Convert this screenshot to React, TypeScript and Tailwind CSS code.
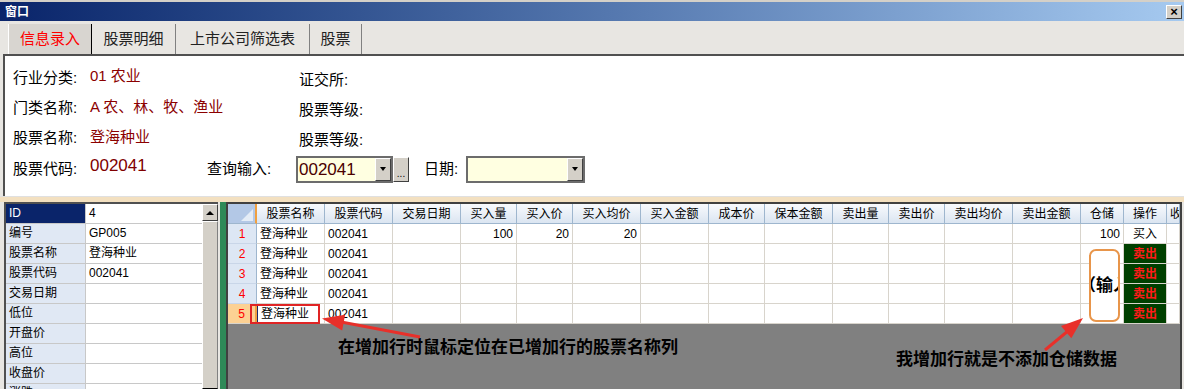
import React from "react";

const cols = [
  { t: "股票名称", w: "w-[68px]" },
  { t: "股票代码", w: "w-[68px]" },
  { t: "交易日期", w: "w-[68px]" },
  { t: "买入量", w: "w-[56px]" },
  { t: "买入价", w: "w-[56px]" },
  { t: "买入均价", w: "w-[68px]" },
  { t: "买入金额", w: "w-[68px]" },
  { t: "成本价", w: "w-[56px]" },
  { t: "保本金额", w: "w-[68px]" },
  { t: "卖出量", w: "w-[56px]" },
  { t: "卖出价", w: "w-[56px]" },
  { t: "卖出均价", w: "w-[68px]" },
  { t: "卖出金额", w: "w-[68px]" },
  { t: "仓储", w: "w-[43px]" },
  { t: "操作", w: "w-[43px]" },
  { t: "收益", w: "w-[13px]" },
];

const empty = ["", "", "", "", "", "", "", "", "", "", "", ""];
const rows = [
  ["登海种业", "002041", "", "100", "20", "20", "", "", "", "", "", "", "", "100", "买入", ""],
  ["登海种业", "002041", ...empty, "卖出", ""],
  ["登海种业", "002041", ...empty, "卖出", ""],
  ["登海种业", "002041", ...empty, "卖出", ""],
  ["登海种业", "002041", ...empty, "卖出", ""],
];

const props = [
  ["ID", "4"],
  ["编号", "GP005"],
  ["股票名称", "登海种业"],
  ["股票代码", "002041"],
  ["交易日期", ""],
  ["低位", ""],
  ["开盘价", ""],
  ["高位", ""],
  ["收盘价", ""],
  ["涨跌", ""],
];

const tabs = [
  { t: "信息录入", w: "w-[84px]" },
  { t: "股票明细", w: "w-[84px]" },
  { t: "上市公司筛选表", w: "w-[134px]" },
  { t: "股票", w: "w-[52px]" },
];

function arrowHead(x1: number, y1: number, x2: number, y2: number) {
  const len = Math.hypot(x2 - x1, y2 - y1);
  const ux = (x2 - x1) / len;
  const uy = (y2 - y1) / len;
  const bx = x2 - ux * 22;
  const by = y2 - uy * 22;
  const px = -uy * 8;
  const py = ux * 8;
  return `${x2},${y2} ${bx + px},${by + py} ${bx - px},${by - py}`;
}

function DropBtn() {
  return (
    <div className="w-[16px] h-full bg-[#d4d0c8] border border-t-white border-l-white border-b-[#404040] border-r-[#404040] flex items-center justify-center">
      <div className="w-0 h-0 border-l-[3.5px] border-r-[3.5px] border-t-[4px] border-l-transparent border-r-transparent border-t-black" />
    </div>
  );
}

export default function App() {
  return (
    <div className="relative w-[1184px] h-[389px] overflow-hidden bg-[#e8e6e2] flex flex-col font-['Liberation_Sans','Noto_Sans_CJK_SC',sans-serif] text-black">
      {/* Title bar */}
      <div className="h-[21px] pt-[2px] bg-[#d4d0c8]">
        <div className="h-[19px] bg-gradient-to-r from-[#0a246a] to-[#a6caf0] flex items-center justify-between pl-[5px] pr-[2px]">
          <span className="text-white font-bold text-[12px] leading-none">窗口</span>
          <div className="w-[16px] h-[14px] bg-[#d4d0c8] border border-t-white border-l-white border-b-[#404040] border-r-[#404040] flex items-center justify-center text-[13px] font-bold leading-none">
            ×
          </div>
        </div>
      </div>

      {/* Tabs */}
      <div className="h-[33px] pl-[8px] pt-[3px] flex items-end">
        {tabs.map((tab, i) => (
          <div
            key={tab.t}
            className={
              i === 0
                ? `${tab.w} h-[30px] bg-[#d8d5d0] border-l border-l-white border-r border-r-black flex items-center justify-center text-[15px] text-[#ff0000]`
                : `${tab.w} h-[30px] border-r border-r-[#808080] flex items-center justify-center text-[15px] text-[#222]`
            }
          >
            {tab.t}
          </div>
        ))}
      </div>

      {/* Form panel */}
      <div className="h-[142px] bg-white border-t-2 border-l-2 border-[#505050] ml-[3px] pl-[8px] pt-[7px] text-[15px]">
        <div className="flex h-[30px] items-center">
          <div className="w-[286px] flex items-center">
            <span className="w-[77px]">行业分类:</span>
            <span className="text-[#8b0000] -translate-y-[2px]">01 农业</span>
          </div>
          <span className="translate-y-[2px]">证交所:</span>
        </div>
        <div className="flex h-[30px] items-center">
          <div className="w-[286px] flex items-center">
            <span className="w-[77px]">门类名称:</span>
            <span className="text-[#8b0000] -translate-y-[1px]">A 农、林、牧、渔业</span>
          </div>
          <span className="translate-y-[2px]">股票等级:</span>
        </div>
        <div className="flex h-[30px] items-center">
          <div className="w-[286px] flex items-center">
            <span className="w-[77px]">股票名称:</span>
            <span className="text-[#8b0000] -translate-y-[1px]">登海种业</span>
          </div>
          <span className="translate-y-[2px]">股票等级:</span>
        </div>
        <div className="flex h-[30px] items-center mt-[1px]">
          <span className="w-[77px]">股票代码:</span>
          <span className="w-[117px] text-[#800000] text-[17px] -translate-y-[3px]">002041</span>
          <span className="w-[89px]">查询输入:</span>
          <div className="w-[97px] h-[27px] border-2 border-[#6c6c6c] bg-[#ffffe1] flex">
            <span className="flex-1 text-[17px] text-[#4a0000] leading-[23px] pl-[1px]">002041</span>
            <DropBtn />
          </div>
          <div className="w-[16px] h-[25px] bg-[#d4d0c8] border border-t-white border-l-white border-b-[#404040] border-r-[#404040] flex items-end justify-center text-[10px] leading-[14px]">
            ...
          </div>
          <span className="ml-[15px] w-[42px]">日期:</span>
          <div className="w-[119px] h-[27px] border-2 border-[#6c6c6c] bg-[#ffffe1] flex">
            <span className="flex-1" />
            <DropBtn />
          </div>
        </div>
      </div>

      {/* Splitter band */}
      <div className="h-[6px] bg-[#f3e0c0] border-t border-[#e0e0e0]" />

      {/* Bottom area */}
      <div className="flex-1 flex min-h-0 text-[12px]">
        {/* Property grid */}
        <div className="ml-[4px] border-t-2 border-l-2 border-[#505050] flex overflow-hidden">
          <div className="flex flex-col">
            {props.map(([k, v], i) => (
              <div key={k} className="flex h-[20px] shrink-0">
                <div
                  className={
                    i === 0
                      ? "w-[80px] bg-[#0a246a] text-white pl-[3px] leading-[19px] border-b border-r border-[#c8c8c8]"
                      : "w-[80px] bg-[#e0e8f4] pl-[3px] leading-[19px] border-b border-r border-[#c8c8c8]"
                  }
                >
                  {k}
                </div>
                <div className="w-[116px] bg-white pl-[3px] leading-[19px] border-b border-[#c8c8c8]">{v}</div>
              </div>
            ))}
          </div>
          <div className="w-[16px] flex flex-col bg-[#ece9e4]">
            <div className="h-[17px] shrink-0 bg-[#d4d0c8] border border-t-white border-l-white border-b-[#404040] border-r-[#404040] flex items-center justify-center">
              <div className="w-0 h-0 border-l-[4px] border-r-[4px] border-b-[4px] border-l-transparent border-r-transparent border-b-black" />
            </div>
            <div className="flex-1 bg-[#d4d0c8] border border-t-white border-l-white border-r-[#808080]" />
          </div>
        </div>

        {/* Splitter */}
        <div className="w-[8px] bg-[#2e8a58] border-l-2 border-[#e8e6e2]" />

        {/* Data grid */}
        <div className="w-[956px] border-t-2 border-l-2 border-r-2 border-[#404040] flex flex-col bg-[#808080]">
          <div className="flex h-[20px] shrink-0 bg-white">
            <div className="relative w-[29px] bg-[#b3c8e6] border-r-2 border-[#f0a040] border-b border-b-[#9eb6ce]">
              <div className="absolute right-[2px] bottom-[2px] w-0 h-0 border-l-[12px] border-t-[12px] border-l-transparent border-t-transparent border-b-0 border-r-[12px] border-r-[#e4ecf6]" />
            </div>
            {cols.map((c) => (
              <div
                key={c.t}
                className={`${c.w} shrink-0 overflow-hidden whitespace-nowrap bg-gradient-to-b from-[#f8fafd] to-[#dbe5f1] border-r border-b border-[#9eb6ce] flex items-center ${c.t === "收益" ? "pl-[3px]" : "justify-center"} leading-none`}
              >
                {c.t}
              </div>
            ))}
          </div>
          {rows.map((r, ri) => (
            <div key={ri} className="flex h-[20px] shrink-0 bg-white">
              <div
                className={
                  ri === 4
                    ? "w-[29px] bg-[#fcd193] border-r-2 border-r-[#f0a040] border-b border-b-[#d8d4cc] text-[#ff0000] flex items-center justify-center"
                    : "w-[29px] bg-[#dde7f4] border-r border-r-[#9eb6ce] border-b border-b-[#c9d6e8] text-[#ff0000] flex items-center justify-center"
                }
              >
                {ri + 1}
              </div>
              {r.map((v, ci) => {
                const c = cols[ci];
                if (v === "卖出") {
                  return (
                    <div key={ci} className={`${c.w} shrink-0 border-r border-b border-[#d8d4cc] bg-[#004000] text-[#ff1a1a] font-bold flex items-center justify-center`}>
                      {v}
                    </div>
                  );
                }
                const right = ci >= 3 && ci <= 13;
                return (
                  <div
                    key={ci}
                    className={`${c.w} shrink-0 overflow-hidden whitespace-nowrap border-r border-b border-[#d8d4cc] flex items-center ${
                      ci === 14 ? "justify-center" : right ? "justify-end pr-[3px]" : "pl-[3px]"
                    } ${ri === 4 && ci === 0 ? "border-l border-l-[#1a2a6a]" : ""}`}
                  >
                    {v}
                  </div>
                );
              })}
            </div>
          ))}
          <div className="flex-1 bg-[#808080]" />
        </div>
      </div>

      {/* Annotations */}
      <div className="absolute left-[250px] top-[304px] w-[70px] h-[20px] border-2 border-[#e02424]" />
      <div className="absolute left-[1089px] top-[249px] w-[31px] h-[73px] border-2 border-[#e8954a] rounded-[7px] bg-white overflow-hidden flex items-center justify-center">
        <span className="shrink-0 whitespace-nowrap text-[17px] font-bold leading-none">（输入</span>
      </div>
      <div className="absolute left-[338px] top-[337px] text-[17px] font-bold leading-[22px] whitespace-nowrap">
        在增加行时鼠标定位在已增加行的股票名称列
      </div>
      <div className="absolute left-[896px] top-[349px] text-[17px] font-bold leading-[22px] whitespace-nowrap">
        我增加行就是不添加仓储数据
      </div>
      <svg className="absolute inset-0 pointer-events-none" width="1184" height="389">
        <line x1="420" y1="337" x2="336" y2="321" stroke="#e8302a" strokeWidth="3" />
        <polygon points={arrowHead(420, 337, 322, 318.5)} fill="#e8302a" />
        <line x1="1045" y1="350" x2="1074" y2="326" stroke="#e8302a" strokeWidth="3" />
        <polygon points={arrowHead(1045, 350, 1083, 318)} fill="#e8302a" />
      </svg>
    </div>
  );
}
